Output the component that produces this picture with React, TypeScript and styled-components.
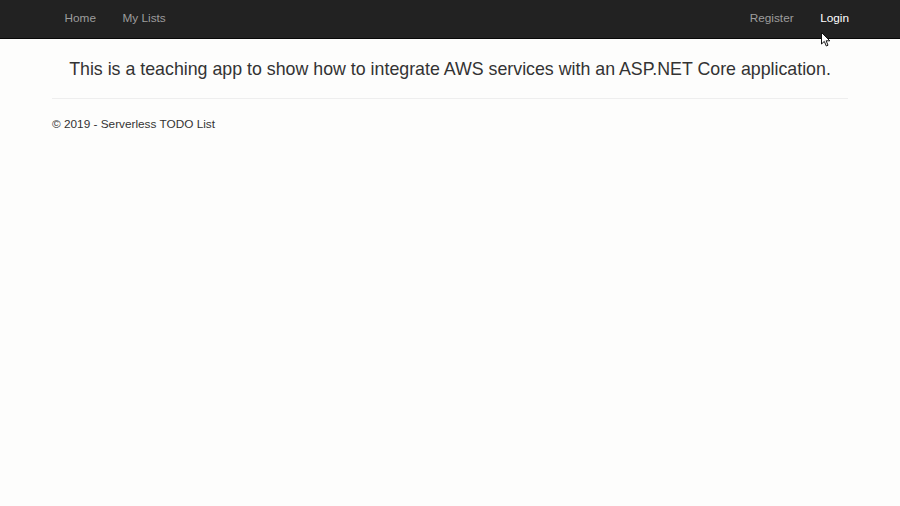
import styled, { createGlobalStyle } from 'styled-components'

const Global = createGlobalStyle`
  html, body {
    margin: 0;
    padding: 0;
    background: #fdfdfc;
    font-family: "Liberation Sans", Arial, sans-serif;
    color: #333;
  }
`

const Navbar = styled.nav`
  background: #222;
  border-bottom: 1px solid #080808;
  height: 39px;
  box-sizing: border-box;
`

const NavInner = styled.div`
  width: 796px;
  margin: 0 auto;
  display: flex;
  justify-content: space-between;
  height: 100%;
`

const NavGroup = styled.ul<{ $side: 'left' | 'right' }>`
  display: flex;
  list-style: none;
  margin: 0;
  padding: 0;
  margin-left: ${p => (p.$side === 'left' ? '-1px' : '0')};
  margin-right: ${p => (p.$side === 'right' ? '-14px' : '0')};
`

const NavLink = styled.a<{ $active?: boolean }>`
  display: block;
  padding: 11px 13px 0 13.5px;
  font-size: 11.8px;
  line-height: 14px;
  color: ${p => (p.$active ? '#fff' : '#9d9d9d')};
  text-decoration: none;
  cursor: pointer;
`

const Container = styled.div`
  width: 796px;
  margin: 0 auto;
`

const Lead = styled.p`
  margin: 19px 0 0;
  font-size: 17.8px;
  line-height: 22px;
  text-align: center;
  color: #333;
`

const Rule = styled.hr`
  margin: 18px 0 0;
  border: 0;
  border-top: 1px solid #eee;
`

const Footer = styled.footer`
  margin-top: 18px;
  font-size: 11.8px;
  line-height: 14px;
  color: #333;
`

const Cursor = styled.svg`
  position: absolute;
  left: 821px;
  top: 32px;
`

export default function App() {
  return (
    <>
      <Global />
      <Navbar>
        <NavInner>
          <NavGroup $side="left">
            <li><NavLink>Home</NavLink></li>
            <li><NavLink>My Lists</NavLink></li>
          </NavGroup>
          <NavGroup $side="right">
            <li><NavLink>Register</NavLink></li>
            <li><NavLink $active>Login</NavLink></li>
          </NavGroup>
        </NavInner>
      </Navbar>
      <Container>
        <Lead>This is a teaching app to show how to integrate AWS services with an ASP.NET Core application.</Lead>
        <Rule />
        <Footer>© 2019 - Serverless TODO List</Footer>
      </Container>
      <Cursor width="12" height="17" viewBox="0 0 12 17">
        <path d="M0.5 0.5 L0.5 12 L3.3 9.4 L5.3 14 L7 13.2 L5.1 8.8 L8.8 8.8 Z" fill="#fff" stroke="#111" strokeWidth="1" />
      </Cursor>
    </>
  )
}
